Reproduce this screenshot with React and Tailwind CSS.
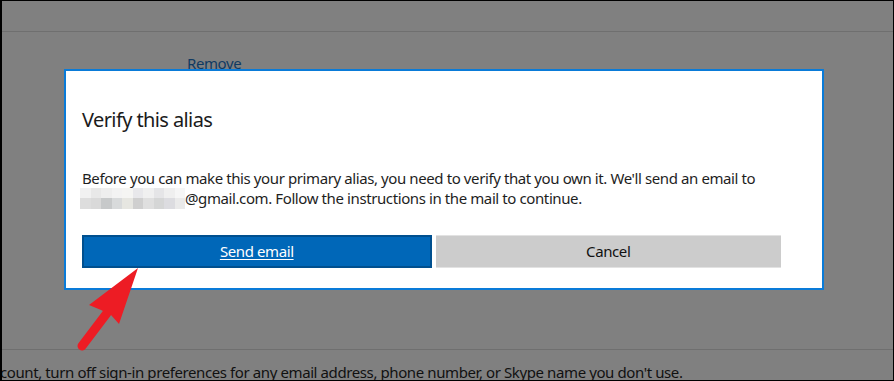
import React from 'react'

const MOSAIC = [
  ['#f1f1f1', '#e8e8e8', '#eeeeee', '#f3f3f3', '#f5f5f3', '#e8e8eb', '#f0f0f0', '#e5e5e7', '#efefef', '#f6f6f6'],
  ['#dddddd', '#d9d9d9', '#c7c9ca', '#d8dadb', '#e6e6e1', '#cfcfcf', '#dfdfdf', '#d5d6d6', '#dcdce0', '#eaeaea'],
]

function Mosaic() {
  return (
    <span className="-ml-[2px] grid shrink-0 grid-cols-[repeat(10,10.5px)] grid-rows-[repeat(2,10.5px)]">
      {MOSAIC.flat().map((c, i) => (
        <span key={i} style={{ backgroundColor: c }} />
      ))}
    </span>
  )
}

function Arrow() {
  return (
    <svg className="pointer-events-none absolute left-0 top-0" width="894" height="381" viewBox="0 0 894 381">
      <path d="M80 345 L105 312" stroke="#ed1c24" strokeWidth="9" strokeLinecap="round" fill="none" />
      <path d="M136 267 L87 304 L99 309 L109 314 L117 323 Z" fill="#ed1c24" />
    </svg>
  )
}

export default function App() {
  return (
    <div className="relative h-[381px] w-[894px] overflow-hidden border border-l-2 border-black bg-[#808080] font-['Noto_Sans',sans-serif]">
      <div className="flex h-full flex-col">
        <div className="h-[31px] border-b border-[#6f6f6f]" />
        <div className="pl-[185px] pt-[21px] text-[15px] leading-[20px] tracking-[-0.4px] text-[#103a62]">Remove</div>
        <div className="flex-1" />
        <div className="-ml-[2px] h-[31px] shrink-0 whitespace-nowrap border-t border-[#6f6f6f] pt-[12px] text-[15px] leading-[20px] tracking-[-0.4px] text-[#111]">
          count, turn off sign-in preferences for any email address, phone number, or Skype name you don't use.
        </div>
      </div>

      <div className="absolute left-[62px] top-[68px] w-[760px] border-2 border-[#0a7bd8] bg-white pb-[20px] pl-[16px] pr-[41px] pt-[35px]">
        <h2 className="text-[20px] leading-[28px] tracking-[-0.6px] text-[#1b1b1b]">Verify this alias</h2>
        <div className="mt-[34px] whitespace-nowrap text-[15px] leading-[20px] tracking-[-0.4px] text-[#1e1e1e]">
          <p>Before you can make this your primary alias, you need to verify that you own it. We'll send an email to</p>
          <div className="flex h-[20px] items-center">
            <Mosaic />
            <span>@gmail.com. Follow the instructions in the mail to continue.</span>
          </div>
        </div>
        <div className="mt-[27px] flex gap-[4px]">
          <button className="h-[33px] flex-1 border-2 border-[#00508f] bg-[#0067b8] text-[15px] tracking-[-0.4px] text-white underline underline-offset-2">
            Send email
          </button>
          <button className="h-[33px] flex-1 border-y border-[#e2e2e2] bg-[#cccccc] text-[15px] tracking-[-0.4px] text-[#111]">
            Cancel
          </button>
        </div>
      </div>

      <Arrow />
    </div>
  )
}
